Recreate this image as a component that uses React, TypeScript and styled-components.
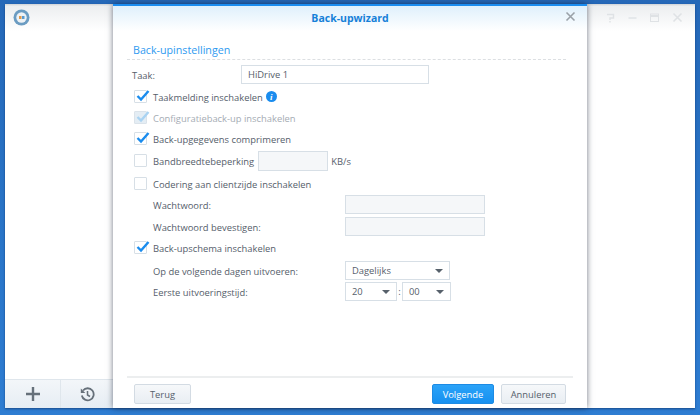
import React from "react";
import styled, { createGlobalStyle, css } from "styled-components";

const Global = createGlobalStyle`
  html, body { margin: 0; padding: 0; width: 700px; height: 415px; overflow: hidden; }
  * { box-sizing: border-box; }
  body { font-family: "Open Sans", "Noto Sans", "Liberation Sans", sans-serif; font-size: 9.4px; color: #56606b; }
`;

const Desktop = styled.div`
  position: relative;
  width: 700px;
  height: 415px;
  padding: 4px 5px 7px;
  background: linear-gradient(180deg, #2568b8 0%, #2a76c9 60%, #2e7dd2 100%);
`;

const AppWindow = styled.div`
  width: 100%;
  height: 100%;
  display: flex;
  flex-direction: column;
  background: #fff;
  box-shadow: 0 1px 2px rgba(10, 40, 90, 0.6);
`;

const AppHeader = styled.div`
  height: 27px;
  flex: none;
  display: flex;
  align-items: center;
  justify-content: space-between;
  padding: 0 12px 0 8px;
  background: linear-gradient(180deg, #cfd2d5 0%, #eceef0 8%, #ffffff 100%);
`;

const WindowTools = styled.div`
  display: flex;
  gap: 13px;
  color: #dfe2e5;
  align-items: center;
`;

const AppBody = styled.div`
  flex: 1;
`;

const AppFooter = styled.div`
  width: 108px;
  height: 29px;
  flex: none;
  display: grid;
  grid-template-columns: 56px 52px;
  background: linear-gradient(180deg, #f3f6f9 0%, #e6edf4 100%);
  border-top: 1px solid #dfe6ec;
`;

const FooterTool = styled.div<{ $divider?: boolean }>`
  display: flex;
  align-items: center;
  justify-content: center;
  color: #66707a;
  ${(p) => p.$divider && css`border-right: 1px solid #dfe6ec;`}
`;

const Dialog = styled.div`
  position: absolute;
  left: 113px;
  top: 4px;
  width: 474px;
  height: 404px;
  display: flex;
  flex-direction: column;
  background: #fff;
  border-top: 2px solid #1b8df0;
  box-shadow: 0 0 6px rgba(20, 30, 50, 0.6);
`;

const DialogHeader = styled.div`
  position: relative;
  flex: none;
  height: 25px;
  display: flex;
  align-items: center;
  justify-content: center;
  background: linear-gradient(180deg, #dff0fc 0%, #ffffff 100%);
  padding-bottom: 2px;
`;

const DialogTitle = styled.div`
  font-weight: 700;
  font-size: 10.5px;
  color: #1580d8;
`;

const CloseButton = styled.div`
  position: absolute;
  right: 11px;
  top: 5px;
  width: 11px;
  height: 11px;
  color: #9aa1a8;
  display: flex;
`;

const Content = styled.div`
  flex: 1;
  display: flex;
  flex-direction: column;
  padding: 11px 21px 0 14px;
`;

const SectionTitle = styled.div`
  height: 18px;
  padding: 0 0 0 6px;
  font-size: 10.7px;
  line-height: 17px;
  color: #2f9af0;
  border-bottom: 1px dashed #dcdfe2;
  margin-bottom: 5px;
`;

const Row = styled.div<{ $h?: number; $indent?: number; $top?: number }>`
  display: flex;
  align-items: center;
  height: ${(p) => p.$h ?? 21}px;
  margin-top: ${(p) => p.$top ?? 0}px;
  padding-left: ${(p) => p.$indent ?? 5}px;
`;

const FieldLabel = styled.div<{ $w: number }>`
  width: ${(p) => p.$w}px;
  flex: none;
  padding-top: 1px;
  white-space: nowrap;
`;

const Box = styled.div<{ $disabled?: boolean }>`
  position: relative;
  width: 13px;
  height: 13px;
  flex: none;
  margin: 0 6px 0 2px;
  border: 1px solid ${(p) => (p.$disabled ? "#dbe3ea" : "#d7dfe6")};
  background: ${(p) => (p.$disabled ? "#e4edf4" : "#fff")};
  border-radius: 1px;
`;

const Tick = styled.svg`
  position: absolute;
  left: 0;
  top: -3px;
  width: 15px;
  height: 15px;
`;

const CheckLabel = styled.span<{ $disabled?: boolean }>`
  padding-top: 1px;
  white-space: nowrap;
  color: ${(p) => (p.$disabled ? "#a5acb4" : "inherit")};
`;

const InfoBadge = styled.span`
  display: inline-flex;
  align-items: center;
  justify-content: center;
  width: 11px;
  height: 11px;
  margin-left: 3px;
  border-radius: 50%;
  background: #1a8cee;
  color: #fff;
  font: italic 700 9px "Liberation Serif", serif;
`;

const TextInput = styled.div<{ $w: number; $h?: number; $muted?: boolean; $gap?: number }>`
  width: ${(p) => p.$w}px;
  height: ${(p) => p.$h ?? 19}px;
  flex: none;
  margin-left: ${(p) => p.$gap ?? 0}px;
  padding: 0 6px;
  display: flex;
  align-items: center;
  border: 1px solid #d7dfe6;
  background: ${(p) => (p.$muted ? "#f5f7f9" : "#fff")};
`;

const Unit = styled.span`
  margin-left: 3px;
  padding-top: 1px;
`;

const SelectBox = styled.div<{ $w: number }>`
  width: ${(p) => p.$w}px;
  height: 19px;
  flex: none;
  display: flex;
  align-items: center;
  justify-content: space-between;
  padding: 0 6px;
  border: 1px solid #d7dfe6;
  background: #fff;
`;

const Caret = styled.span`
  width: 0;
  height: 0;
  border-left: 4px solid transparent;
  border-right: 4px solid transparent;
  border-top: 4px solid #57616b;
`;

const Colon = styled.span`
  width: 5px;
  text-align: center;
`;

const DialogFooter = styled.div`
  flex: none;
  height: 32px;
  margin: 0 14px 0 14px;
  padding: 6px 7px 0;
  display: flex;
  justify-content: space-between;
  border-top: 2px solid #eceeef;
`;

const ButtonGroup = styled.div`
  display: flex;
  gap: 7px;
`;

const Button = styled.div<{ $w: number; $primary?: boolean }>`
  width: ${(p) => p.$w}px;
  height: 20px;
  display: flex;
  align-items: center;
  justify-content: center;
  border-radius: 2px;
  border: 1px solid ${(p) => (p.$primary ? "#1d8be4" : "#d3dbe3")};
  background: ${(p) =>
    p.$primary
      ? "linear-gradient(180deg, #2ba3f8 0%, #1690f0 100%)"
      : "linear-gradient(180deg, #f6f8fa 0%, #e9eef3 100%)"};
  color: ${(p) => (p.$primary ? "#fff" : "#56616c")};
`;

const Check = ({ checked, disabled }: { checked?: boolean; disabled?: boolean }) => (
  <Box $disabled={disabled}>
    {checked && (
      <Tick viewBox="0 0 15 15">
        <path
          d="M2.5 8 L6 11.5 L13.5 3"
          fill="none"
          stroke={disabled ? "#a9d3f2" : "#1a8cee"}
          strokeWidth="2.4"
        />
      </Tick>
    )}
  </Box>
);

const AppLogo = () => (
  <svg width="17" height="17" viewBox="0 0 17 17">
    <circle cx="8.5" cy="8.5" r="8" fill="#6b9cc2" />
    <circle cx="8.5" cy="8.5" r="5.2" fill="#eef2f5" />
    <rect x="6" y="7" width="2.5" height="3" fill="#e39a4a" />
    <rect x="9" y="7" width="2.5" height="3" fill="#5a9bd0" />
  </svg>
);

const CloseIcon = () => (
  <svg width="11" height="11" viewBox="0 0 11 11">
    <path d="M1.5 1.5 L9.5 9.5 M9.5 1.5 L1.5 9.5" stroke="currentColor" strokeWidth="1.6" fill="none" />
  </svg>
);

const HelpIcon = () => (
  <svg width="9" height="10" viewBox="0 0 9 10">
    <path d="M1 1.5 H7.5 V5 H4 V7 M4 8 V9.5" stroke="currentColor" strokeWidth="1.4" fill="none" />
  </svg>
);

const MinIcon = () => (
  <svg width="9" height="10" viewBox="0 0 9 10">
    <path d="M0.5 5 H8.5" stroke="currentColor" strokeWidth="1.4" />
  </svg>
);

const MaxIcon = () => (
  <svg width="9" height="10" viewBox="0 0 9 10">
    <rect x="0.5" y="1" width="8" height="7.5" fill="none" stroke="currentColor" />
    <rect x="0.5" y="2" width="8" height="2" fill="currentColor" />
  </svg>
);

const PlusIcon = () => (
  <svg width="14" height="14" viewBox="0 0 14 14">
    <path d="M7 0 V14 M0 7 H14" stroke="currentColor" strokeWidth="2.4" />
  </svg>
);

const HistoryIcon = () => (
  <svg width="15" height="15" viewBox="0 0 15 15">
    <path d="M3 3.5 A6 6 0 1 1 1.8 8.5" fill="none" stroke="currentColor" strokeWidth="1.8" />
    <path d="M0.8 1.5 L0.8 6 L5.3 6 Z" fill="currentColor" />
    <path d="M7.5 4 V8 L10 9.5" fill="none" stroke="currentColor" strokeWidth="1.5" />
  </svg>
);

export default function App() {
  return (
    <Desktop>
      <Global />
      <AppWindow>
        <AppHeader>
          <AppLogo />
          <WindowTools>
            <HelpIcon />
            <MinIcon />
            <MaxIcon />
            <CloseIcon />
          </WindowTools>
        </AppHeader>
        <AppBody />
        <AppFooter>
          <FooterTool $divider>
            <PlusIcon />
          </FooterTool>
          <FooterTool>
            <HistoryIcon />
          </FooterTool>
        </AppFooter>
      </AppWindow>
      <Dialog>
        <DialogHeader>
          <DialogTitle>Back-upwizard</DialogTitle>
          <CloseButton>
            <CloseIcon />
          </CloseButton>
        </DialogHeader>
        <Content>
          <SectionTitle>Back-upinstellingen</SectionTitle>
          <Row $h={19}>
            <FieldLabel $w={109}>Taak:</FieldLabel>
            <TextInput $w={188}>HiDrive 1</TextInput>
          </Row>
          <Row $top={2}>
            <Check checked />
            <CheckLabel>Taakmelding inschakelen</CheckLabel>
            <InfoBadge>i</InfoBadge>
          </Row>
          <Row>
            <Check checked disabled />
            <CheckLabel $disabled>Configuratieback-up inschakelen</CheckLabel>
          </Row>
          <Row>
            <Check checked />
            <CheckLabel>Back-upgegevens comprimeren</CheckLabel>
          </Row>
          <Row $top={1}>
            <Check />
            <CheckLabel>Bandbreedtebeperking</CheckLabel>
            <TextInput $w={70} $h={20} $muted $gap={4} />
            <Unit>KB/s</Unit>
          </Row>
          <Row $top={2}>
            <Check />
            <CheckLabel>Codering aan clientzijde inschakelen</CheckLabel>
          </Row>
          <Row $indent={26}>
            <FieldLabel $w={192}>Wachtwoord:</FieldLabel>
            <TextInput $w={140} $muted />
          </Row>
          <Row $indent={26} $top={1}>
            <FieldLabel $w={192}>Wachtwoord bevestigen:</FieldLabel>
            <TextInput $w={140} $muted />
          </Row>
          <Row>
            <Check checked />
            <CheckLabel>Back-upschema inschakelen</CheckLabel>
          </Row>
          <Row $indent={26} $top={2}>
            <FieldLabel $w={192}>Op de volgende dagen uitvoeren:</FieldLabel>
            <SelectBox $w={105}>
              Dagelijks
              <Caret />
            </SelectBox>
          </Row>
          <Row $indent={26}>
            <FieldLabel $w={192}>Eerste uitvoeringstijd:</FieldLabel>
            <SelectBox $w={52}>
              20
              <Caret />
            </SelectBox>
            <Colon>:</Colon>
            <SelectBox $w={49}>
              00
              <Caret />
            </SelectBox>
          </Row>
        </Content>
        <DialogFooter>
          <Button $w={57}>Terug</Button>
          <ButtonGroup>
            <Button $w={62} $primary>
              Volgende
            </Button>
            <Button $w={65}>Annuleren</Button>
          </ButtonGroup>
        </DialogFooter>
      </Dialog>
    </Desktop>
  );
}
